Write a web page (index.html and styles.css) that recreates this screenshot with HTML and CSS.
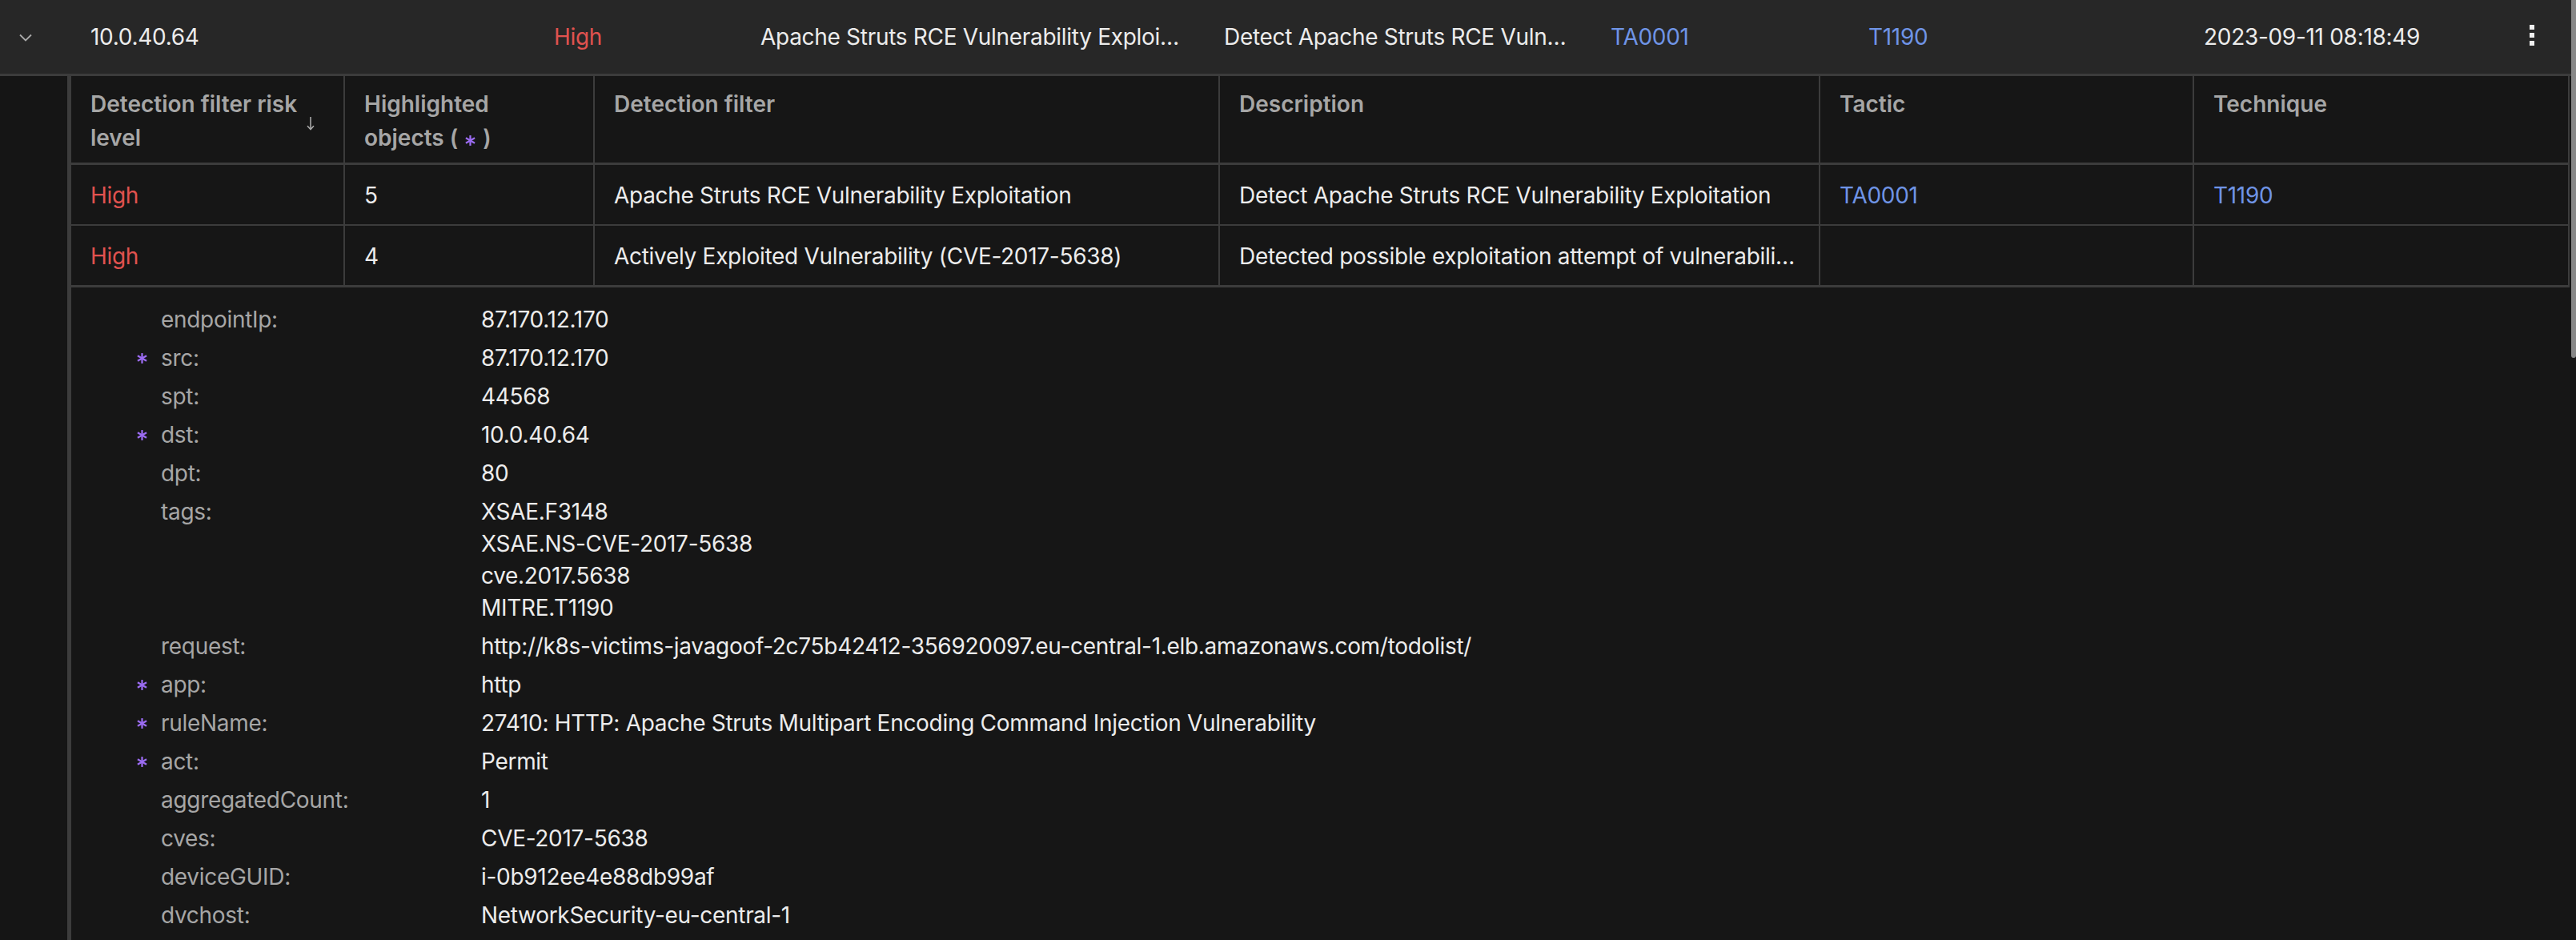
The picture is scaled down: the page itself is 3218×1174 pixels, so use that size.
FILE: index.html
```html
<!DOCTYPE html>
<html lang="en">
<head>
<meta charset="utf-8">
<title>Alert detail</title>
<link rel="stylesheet" href="styles.css">
</head>
<body>
<div class="page">
  <div class="alert-row">
    <div class="cell chev">
      <svg width="16" height="10" viewBox="0 0 16 10"><polyline points="1,1.5 8,8.5 15,1.5" fill="none" stroke="#a9a9a9" stroke-width="1.8"/></svg>
    </div>
    <div class="cell">10.0.40.64</div>
    <div class="cell risk">High</div>
    <div class="cell trunc">Apache Struts RCE Vulnerability Exploitation</div>
    <div class="cell trunc">Detect Apache Struts RCE Vulnerability Exploitation</div>
    <div class="cell link">TA0001</div>
    <div class="cell link">T1190</div>
    <div class="cell">2023-09-11 08:18:49</div>
    <div class="cell more"><span class="dot"></span><span class="dot"></span><span class="dot"></span></div>
  </div>

  <div class="expanded">
    <div class="gutter"></div>
    <div class="panel">
      <div class="dtable">
        <div class="th th-sort">
          <span class="th-label">Detection filter risk level</span>
          <svg class="sort" width="10" height="18" viewBox="0 0 10 18"><line x1="5" y1="1" x2="5" y2="16.5" stroke="#a8a8a8" stroke-width="1.6"/><polyline points="1,12.3 5,16.5 9,12.3" fill="none" stroke="#a8a8a8" stroke-width="1.6"/></svg>
        </div>
        <div class="th">Highlighted objects (<svg class="ast ast-inline" width="15" height="15" viewBox="0 0 14 14"><line x1="7" y1="1" x2="7" y2="13"/><line x1="1.8" y1="4" x2="12.2" y2="10"/><line x1="1.8" y1="10" x2="12.2" y2="4"/></svg>)</div>
        <div class="th">Detection filter</div>
        <div class="th">Description</div>
        <div class="th">Tactic</div>
        <div class="th">Technique</div>

        <div class="td risk">High</div>
        <div class="td">5</div>
        <div class="td">Apache Struts RCE Vulnerability Exploitation</div>
        <div class="td trunc">Detect Apache Struts RCE Vulnerability Exploitation</div>
        <div class="td link">TA0001</div>
        <div class="td link">T1190</div>

        <div class="td last risk">High</div>
        <div class="td last">4</div>
        <div class="td last">Actively Exploited Vulnerability (CVE-2017-5638)</div>
        <div class="td last trunc">Detected possible exploitation attempt of vulnerability CVE-2017-5638 in Apache Struts</div>
        <div class="td last"></div>
        <div class="td last"></div>
      </div>

      <div class="details">
        <span class="mark"></span><span class="key">endpointIp:</span><span class="val">87.170.12.170</span>
        <span class="mark"><svg class="ast" width="15" height="15" viewBox="0 0 14 14"><line x1="7" y1="1" x2="7" y2="13"/><line x1="1.8" y1="4" x2="12.2" y2="10"/><line x1="1.8" y1="10" x2="12.2" y2="4"/></svg></span><span class="key">src:</span><span class="val">87.170.12.170</span>
        <span class="mark"></span><span class="key">spt:</span><span class="val">44568</span>
        <span class="mark"><svg class="ast" width="15" height="15" viewBox="0 0 14 14"><line x1="7" y1="1" x2="7" y2="13"/><line x1="1.8" y1="4" x2="12.2" y2="10"/><line x1="1.8" y1="10" x2="12.2" y2="4"/></svg></span><span class="key">dst:</span><span class="val">10.0.40.64</span>
        <span class="mark"></span><span class="key">dpt:</span><span class="val">80</span>
        <span class="mark"></span><span class="key">tags:</span><span class="val"><span class="line">XSAE.F3148</span><span class="line">XSAE.NS-CVE-2017-5638</span><span class="line">cve.2017.5638</span><span class="line">MITRE.T1190</span></span>
        <span class="mark"></span><span class="key">request:</span><span class="val">http://k8s-victims-javagoof-2c75b42412-356920097.eu-central-1.elb.amazonaws.com/todolist/</span>
        <span class="mark"><svg class="ast" width="15" height="15" viewBox="0 0 14 14"><line x1="7" y1="1" x2="7" y2="13"/><line x1="1.8" y1="4" x2="12.2" y2="10"/><line x1="1.8" y1="10" x2="12.2" y2="4"/></svg></span><span class="key">app:</span><span class="val">http</span>
        <span class="mark"><svg class="ast" width="15" height="15" viewBox="0 0 14 14"><line x1="7" y1="1" x2="7" y2="13"/><line x1="1.8" y1="4" x2="12.2" y2="10"/><line x1="1.8" y1="10" x2="12.2" y2="4"/></svg></span><span class="key">ruleName:</span><span class="val">27410: HTTP: Apache Struts Multipart Encoding Command Injection Vulnerability</span>
        <span class="mark"><svg class="ast" width="15" height="15" viewBox="0 0 14 14"><line x1="7" y1="1" x2="7" y2="13"/><line x1="1.8" y1="4" x2="12.2" y2="10"/><line x1="1.8" y1="10" x2="12.2" y2="4"/></svg></span><span class="key">act:</span><span class="val">Permit</span>
        <span class="mark"></span><span class="key">aggregatedCount:</span><span class="val">1</span>
        <span class="mark"></span><span class="key">cves:</span><span class="val">CVE-2017-5638</span>
        <span class="mark"></span><span class="key">deviceGUID:</span><span class="val">i-0b912ee4e88db99af</span>
        <span class="mark"></span><span class="key">dvchost:</span><span class="val">NetworkSecurity-eu-central-1</span>
      </div>
    </div>
  </div>
  <div class="scrollbar"></div>
</div>
</body>
</html>
```

FILE: styles.css
```css
* { box-sizing: border-box; }

html, body {
  margin: 0;
  padding: 0;
  background: #161616;
  height: 1174px;
  overflow: hidden;
}

body {
  font-family: Inter, "Noto Sans", "Liberation Sans", sans-serif;
  font-size: 28px;
  line-height: 40px;
  letter-spacing: -0.3px;
  color: #ececec;
}

.page {
  position: relative;
  width: 3218px;
  height: 1174px;
  padding-right: 6px;
}

/* top alert row */
.alert-row {
  display: grid;
  grid-template-columns: 113px 579px 258px 579px 483px 322px 419px 1fr 72px;
  align-items: center;
  height: 95px;
  background: #272727;
  border-bottom: 3px solid #3c3c3c;
}

.cell {
  white-space: nowrap;
  overflow: hidden;
  padding-right: 48px;
}

.cell.chev {
  display: flex;
  padding-left: 24px;
  padding-right: 0;
  padding-top: 2px;
}
.cell.chev svg { display: block; }

.trunc {
  overflow: hidden;
  text-overflow: ellipsis;
  white-space: nowrap;
}

.risk { color: #e0524f; }
.link { color: #6f94e6; }

.cell.more {
  display: flex;
  flex-direction: column;
  gap: 4px;
  padding: 0 0 4px 20px;
}
.dot {
  display: block;
  width: 6px;
  height: 6px;
  background: #efefef;
}

/* expanded section */
.expanded {
  display: flex;
  height: 1079px;
}

.gutter {
  width: 84px;
  flex: none;
  background: #151515;
}

.panel {
  flex: 1;
  border-left: 5px solid #3c3c3c;
  background: #161616;
}

.dtable {
  display: grid;
  grid-template-columns: 342px 312px 781px 750px 467px 1fr;
  margin-right: 2px;
}

.th {
  font-weight: 600;
  color: #a6a6a6;
  letter-spacing: 0;
  line-height: 42px;
  padding: 14px 24px 10px 24px;
  border-right: 2px solid #3c3c3c;
  border-bottom: 3px solid #3c3c3c;
}

.th-sort {
  display: flex;
  align-items: center;
  gap: 8px;
  padding-right: 36px;
}
.th-label { flex: 1; max-width: 266px; }
.sort { flex: none; display: block; margin-top: 6px; margin-left: auto; }

.ast line {
  stroke: #9c6cf3;
  stroke-width: 2.1;
}
.ast-inline {
  vertical-align: -1px;
  margin: 0 8px;
}

.td {
  padding: 18px 24px 16px 24px;
  border-right: 2px solid #3c3c3c;
  border-bottom: 2px solid #3c3c3c;
  min-height: 76px;
  white-space: nowrap;
}
.td.last { border-bottom-width: 3px; }

/* key/value details */
.details {
  display: grid;
  grid-template-columns: 36px 400px 1fr;
  row-gap: 8px;
  padding: 20px 0 0 76px;
}

.mark {
  display: flex;
  align-items: center;
  height: 40px;
}
.mark svg { display: block; margin-left: 5px; }

.key { color: #a6a6a6; }
.val { color: #ececec; white-space: nowrap; }
.val .line { display: block; }

.scrollbar {
  position: absolute;
  top: 0;
  right: 0;
  width: 6px;
  height: 447px;
  background: #878787;
  border-radius: 0 0 3px 3px;
}
```
